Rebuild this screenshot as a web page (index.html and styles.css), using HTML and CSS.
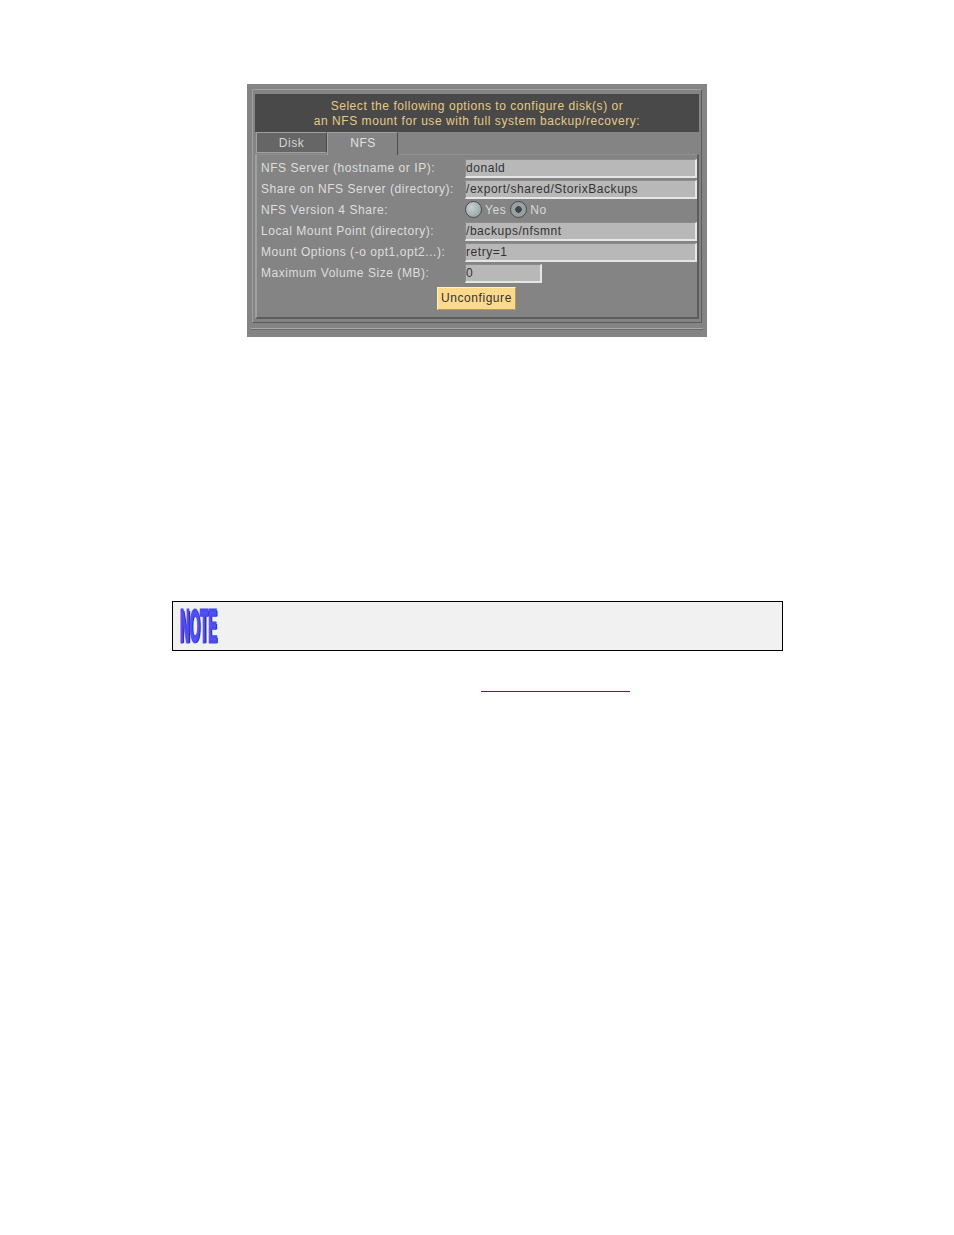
FILE: index.html
```html
<!DOCTYPE html>
<html lang="en">
<head>
<meta charset="utf-8">
<title>NFS backup configuration</title>
<link rel="stylesheet" href="styles.css">
</head>
<body>
<main class="panel">
  <div class="frame">
    <div class="banner">Select the following options to configure disk(s) or<br>an NFS mount for use with full system backup/recovery:</div>
    <div class="tabs">
      <div class="tab">Disk</div>
      <div class="tab active">NFS</div>
    </div>
    <div class="body">
      <div class="row"><span class="label">NFS Server (hostname or IP):</span><span class="field">donald</span></div>
      <div class="row"><span class="label">Share on NFS Server (directory):</span><span class="field">/export/shared/StorixBackups</span></div>
      <div class="row">
        <span class="label">NFS Version 4 Share:</span>
        <span class="radios">
          <span class="radio"></span><span class="radio-label">Yes</span>
          <span class="radio on"></span><span class="radio-label">No</span>
        </span>
      </div>
      <div class="row"><span class="label">Local Mount Point (directory):</span><span class="field">/backups/nfsmnt</span></div>
      <div class="row"><span class="label">Mount Options (-o opt1,opt2...):</span><span class="field">retry=1</span></div>
      <div class="row"><span class="label">Maximum Volume Size (MB):</span><span class="field small">0</span></div>
      <div class="actions"><span class="button">Unconfigure</span></div>
    </div>
  </div>
  <div class="rule"></div>
</main>
<section class="note"><span class="note-logo">NOTE</span></section>
<div class="link-line"></div>
</body>
</html>
```
FILE: styles.css
```css
html, body { margin: 0; padding: 0; background: #fff; }
body { height: 1235px; overflow: hidden; font-family: "Liberation Sans", Arial, sans-serif; }

.panel {
  box-sizing: border-box;
  width: 460px;
  height: 253px;
  margin: 84px 0 0 247px;
  padding: 5px 5px 0;
  background: #848484;
  font-size: 12px;
  letter-spacing: 0.55px;
}
.frame {
  box-sizing: border-box;
  height: 234px;
  padding: 4px 2px 0;
  border: 1px solid #a0a0a0;
  border-right-color: #5c5c5c;
  border-bottom-color: #5c5c5c;
}
.banner {
  box-sizing: border-box;
  height: 38px;
  padding-top: 5px;
  background: #494949;
  color: #e6ca84;
  text-align: center;
  line-height: 15px;
}
.tabs { display: flex; height: 22px; padding-left: 1px; }
.tab {
  box-sizing: border-box;
  width: 71px;
  height: 21px;
  border: 1px solid #a0a0a0;
  border-right-color: #4c4c4c;
  border-bottom-color: #a0a0a0;
  background: #666;
  color: #d4d4d4;
  text-align: center;
  line-height: 20px;
}
.tab.active {
  height: 23px;
  padding-left: 1px;
  position: relative;
  z-index: 1;
  background: #848484;
  border-bottom: 0;
  color: #e0e0e0;
}
.body {
  box-sizing: border-box;
  height: 165px;
  padding: 4px 1px 0 4px;
  border: 2px solid #a0a0a0;
  border-top-color: #8f8f8f;
  border-right-color: #5c5c5c;
  border-bottom-color: #5c5c5c;
  border-top-width: 1px;
}
.row { display: flex; align-items: flex-start; height: 21px; color: #dedede; line-height: 18px; }
.label { width: 204px; flex: none; white-space: nowrap; }
.field {
  box-sizing: border-box;
  flex: none;
  width: 232px;
  height: 19px;
  background: #b8b8b8;
  border: 1px solid #8c8c8c;
  border-right: 2px solid #e6e6e6;
  border-bottom: 2px solid #e6e6e6;
  color: #333;
  line-height: 16px;
  white-space: nowrap;
}
.field.small { width: 77px; }
.radios { display: flex; align-items: flex-start; }
.radio {
  box-sizing: border-box;
  width: 17px;
  height: 17px;
  border-radius: 50%;
  border: 1px solid #4a4a4a;
  background: radial-gradient(circle at 35% 35%, #c6d0d0, #8e9a9a);
}
.radio.on {
  background: radial-gradient(circle, #3c4450 0 3px, #98a0a0 3.5px);
  margin-left: 4px;
}
.radio-label { margin-left: 3px; color: #d8d8d8; }
.actions { display: flex; justify-content: center; padding: 2px 4px 0 0; }
.button {
  box-sizing: border-box;
  width: 79px;
  height: 23px;
  background: #fdd98c;
  border: 1px solid #fff0c4;
  border-right-color: #b09a60;
  border-bottom-color: #b09a60;
  color: #333;
  text-align: center;
  line-height: 20px;
}
.rule {
  height: 1px;
  margin: 5px -1px 0;
  background: #a8a8a8;
  box-shadow: 0 1px 0 #6c6c6c;
}

.note {
  box-sizing: border-box;
  display: flex;
  align-items: center;
  width: 611px;
  height: 50px;
  margin: 264px 0 0 172px;
  padding-left: 7px;
  background: #f1f1f1;
  border: 1px solid #000;
  overflow: hidden;
}
.note-logo {
  display: block;
  width: 38px;
  font: bold 46px/46px "Liberation Sans", Arial, sans-serif;
  color: #5252fa;
  -webkit-text-stroke: 3px #4a4af0;
  text-shadow: 4px 1px 0 #14145e;
  white-space: nowrap;
  transform: scaleX(0.29);
  transform-origin: left center;
}
.link-line {
  width: 149px;
  height: 1px;
  margin: 40px 0 0 481px;
  background: #6d0f73;
}
```
